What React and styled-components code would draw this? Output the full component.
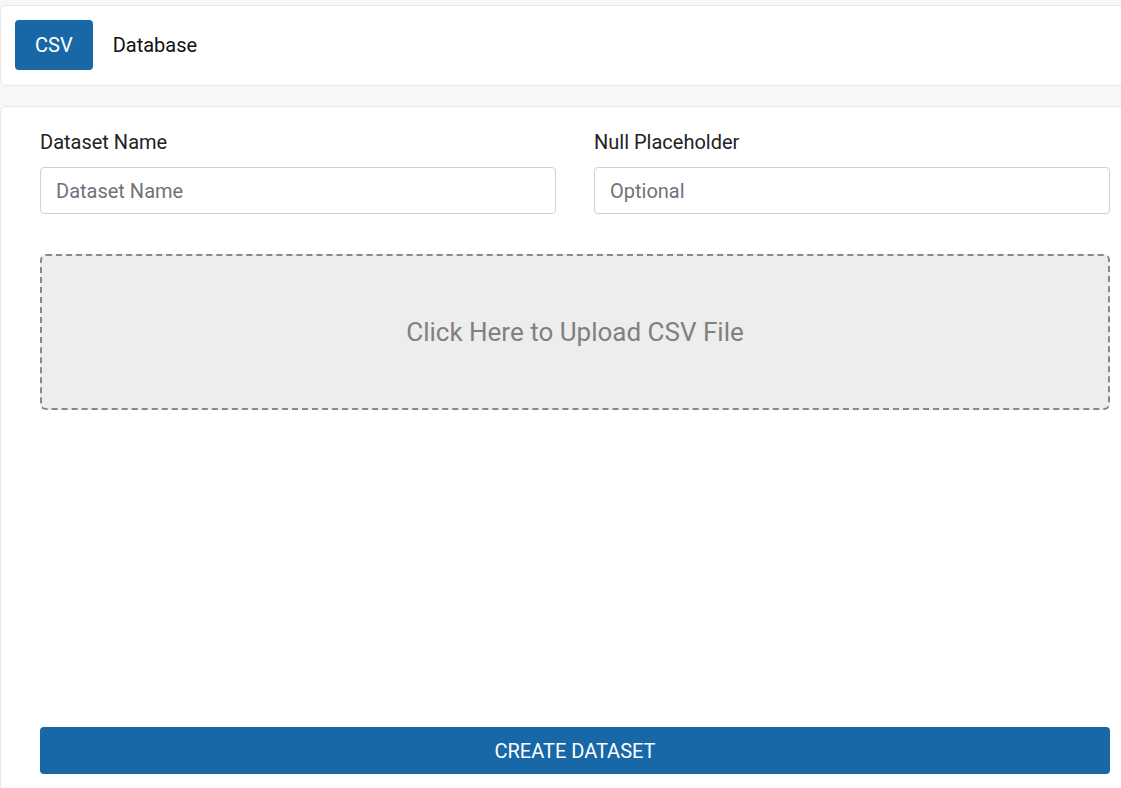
import React, { useState } from 'react';
import styled, { createGlobalStyle } from 'styled-components';

const GlobalStyle = createGlobalStyle`
  html, body {
    margin: 0;
    padding: 0;
    overflow: hidden;
    background: #f6f7f9;
    font-family: Roboto, "Liberation Sans", sans-serif;
  }
  * { box-sizing: border-box; }
`;

const Page = styled.div`
  width: 1150px;
  padding: 5px 0 0 0;
  display: flex;
  flex-direction: column;
  gap: 20px;
`;

const Card = styled.div`
  background: #fff;
  border: 1px solid #e6e8eb;
  border-radius: 6px;
`;

const TabBar = styled(Card)`
  display: flex;
  align-items: center;
  padding: 14px 14px 15px;
`;

const Tab = styled.button`
  height: 50px;
  padding: 0 20px;
  border: none;
  border-radius: 4px;
  font-family: inherit;
  font-size: 20px;
  cursor: pointer;
  background: ${(p) => (p.active ? '#1868a8' : 'transparent')};
  color: ${(p) => (p.active ? '#fff' : '#111')};
`;

const FormCard = styled(Card)`
  padding: 23px 39px 31px;
  height: 700px;
  display: flex;
  flex-direction: column;
`;

const Row = styled.div`
  display: grid;
  grid-template-columns: 1fr 1fr;
  column-gap: 38px;
`;

const Field = styled.label`
  display: flex;
  flex-direction: column;
  gap: 13px;
  color: #222;
  font-size: 20px;
`;

const Input = styled.input`
  height: 47px;
  padding: 0 15px;
  border: 1px solid #ced2d8;
  border-radius: 4px;
  font-family: inherit;
  font-size: 20px;
  color: #333;
  outline: none;
  &::placeholder { color: #6c737d; }
`;

const DropZone = styled.div`
  margin-top: 40px;
  height: 156px;
  background: #ededed;
  border: 2px dashed #888;
  border-radius: 6px;
  display: flex;
  align-items: center;
  justify-content: center;
  color: #808080;
  font-size: 26px;
  cursor: pointer;
`;

const Spacer = styled.div`
  flex: 1;
`;

const Submit = styled.button`
  height: 47px;
  border: none;
  border-radius: 4px;
  background: #1868a8;
  color: #fff;
  font-family: inherit;
  font-size: 20px;
  text-transform: uppercase;
  cursor: pointer;
`;

export default function App() {
  const [tab, setTab] = useState('csv');
  return (
    <>
      <GlobalStyle />
      <Page>
        <TabBar>
          <Tab active={tab === 'csv'} onClick={() => setTab('csv')}>CSV</Tab>
          <Tab active={tab === 'db'} onClick={() => setTab('db')}>Database</Tab>
        </TabBar>
        <FormCard>
          <Row>
            <Field>
              Dataset Name
              <Input placeholder="Dataset Name" />
            </Field>
            <Field>
              Null Placeholder
              <Input placeholder="Optional" />
            </Field>
          </Row>
          <DropZone>Click Here to Upload CSV File</DropZone>
          <Spacer />
          <Submit>Create Dataset</Submit>
        </FormCard>
      </Page>
    </>
  );
}
